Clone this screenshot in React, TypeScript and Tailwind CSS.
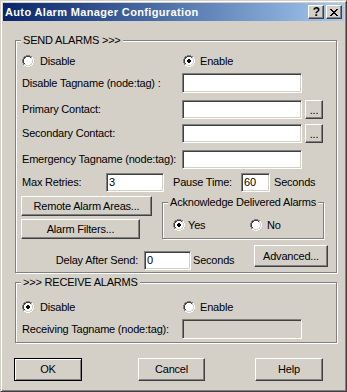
import React from "react";

const COL: Record<string, string> = {
  G: "#808080",
  D: "#404040",
  L: "#d4d0c8",
  W: "#ffffff",
  K: "#000000",
};

const RADIO_MAP = [
  "....GGGG....",
  "..GGDDDDGG..",
  ".GDDWWWWDLW.",
  ".GDWWWWWWLW.",
  "GDWWWWWWWWLW",
  "GDWWWWWWWWLW",
  "GDWWWWWWWWLW",
  "GDWWWWWWWWLW",
  ".GDWWWWWWLW.",
  ".GLLWWWWLLW.",
  "..WWLLLLWW..",
  "....WWWW....",
];

const DOT_MAP = [
  "............",
  "............",
  "............",
  "............",
  ".....KK.....",
  "....KKKK....",
  "....KKKK....",
  ".....KK.....",
  "............",
  "............",
  "............",
  "............",
];

const X_MAP = [
  "KK....KK",
  ".KK..KK.",
  "..KKKK..",
  "...KK...",
  "..KKKK..",
  ".KK..KK.",
  "KK....KK",
];

function Pixels({ map, prefix }: { map: string[]; prefix: string }) {
  const out: React.ReactNode[] = [];
  map.forEach((row, y) =>
    row.split("").forEach((c, x) => {
      if (c !== ".") {
        out.push(
          <rect key={`${prefix}-${x}-${y}`} x={x} y={y} width={1} height={1} fill={COL[c]} />
        );
      }
    })
  );
  return <>{out}</>;
}

function Radio({ checked }: { checked?: boolean }) {
  return (
    <svg width={12} height={12} viewBox="0 0 12 12" shapeRendering="crispEdges" className="shrink-0 block">
      <Pixels map={RADIO_MAP} prefix="r" />
      {checked && <Pixels map={DOT_MAP} prefix="d" />}
    </svg>
  );
}

function Btn({ className, children }: { className: string; children?: React.ReactNode }) {
  return (
    <div
      className={`flex items-center justify-center bg-[#d4d0c8] border border-t-white border-l-white border-r-[#404040] border-b-[#404040] shadow-[inset_-1px_-1px_0_#808080] whitespace-nowrap ${className}`}
    >
      {children}
    </div>
  );
}

function Field({ className, value, disabled }: { className: string; value?: string; disabled?: boolean }) {
  return (
    <div
      className={`flex items-center pl-[2px] border border-t-[#808080] border-l-[#808080] border-r-white border-b-white shadow-[inset_1px_1px_0_#404040,inset_-1px_-1px_0_#d4d0c8] ${
        disabled ? "bg-[#d4d0c8]" : "bg-white"
      } ${className}`}
    >
      {value}
    </div>
  );
}

function Group({ label, className, children }: { label: string; className: string; children?: React.ReactNode }) {
  return (
    <div className={`relative border border-[#808080] shadow-[inset_1px_1px_0_#fff,1px_1px_0_#fff] ${className}`}>
      <span className="absolute left-[5px] -top-[7px] px-[2px] bg-[#d4d0c8] leading-[13px] whitespace-nowrap">
        {label}
      </span>
      {children}
    </div>
  );
}

function TitleBtn({ children }: { children?: React.ReactNode }) {
  return (
    <div className="w-[16px] h-[14px] flex items-center justify-center bg-[#d4d0c8] border border-t-white border-l-white border-r-[#404040] border-b-[#404040] shadow-[inset_-1px_-1px_0_#808080]">
      {children}
    </div>
  );
}

export default function App() {
  return (
    <div className="font-['Liberation_Sans',Arial,sans-serif] text-[11px] leading-[13px] tracking-[-0.2px] text-black">
      <div className="w-[347px] h-[392px] p-[2px] bg-[#d4d0c8] border border-t-[#d4d0c8] border-l-[#d4d0c8] border-r-[#404040] border-b-[#404040] shadow-[inset_1px_1px_0_#fff,inset_-1px_-1px_0_#808080] flex flex-col">
        {/* Title bar */}
        <div className="h-[18px] shrink-0 flex items-center justify-between bg-linear-to-r from-[#0a246a] to-[#a6caf0] pl-[2px] pr-[2px]">
          <span className="text-white font-bold text-[11px] tracking-[0.35px] whitespace-nowrap">
            Auto Alarm Manager Configuration
          </span>
          <div className="flex items-center gap-[2px]">
            <TitleBtn>
              <span className="font-bold text-[12px] leading-[12px] tracking-normal pl-[1px]">?</span>
            </TitleBtn>
            <TitleBtn>
              <svg width={8} height={7} viewBox="0 0 8 7" shapeRendering="crispEdges" className="block">
                <Pixels map={X_MAP} prefix="x" />
              </svg>
            </TitleBtn>
          </div>
        </div>

        {/* SEND ALARMS group */}
        <Group label="SEND ALARMS >>>" className="ml-[12px] mt-[19px] w-[322px] h-[233px] shrink-0 flex flex-col">
          <div className="mt-[14px] h-[12px] flex items-center">
            <div className="w-[167px] pl-[6px] flex items-center">
              <Radio />
              <span className="ml-[6px]">Disable</span>
            </div>
            <Radio checked />
            <span className="ml-[5px]">Enable</span>
          </div>

          <div className="mt-[6px] h-[20px] flex items-center">
            <span className="w-[166px] pl-[6px] whitespace-nowrap">Disable Tagname (node:tag) :</span>
            <Field className="w-[120px] h-[20px]" />
          </div>

          <div className="mt-[7px] h-[19px] flex items-center">
            <span className="w-[166px] pl-[6px] whitespace-nowrap">Primary Contact:</span>
            <Field className="w-[120px] h-[19px]" />
            <Btn className="ml-[3px] w-[18px] h-[19px]">
              <span className="pt-[2px]">...</span>
            </Btn>
          </div>

          <div className="mt-[5px] h-[19px] flex items-center">
            <span className="w-[166px] pl-[6px] whitespace-nowrap">Secondary Contact:</span>
            <Field className="w-[120px] h-[19px]" />
            <Btn className="ml-[3px] w-[18px] h-[19px]">
              <span className="pt-[2px]">...</span>
            </Btn>
          </div>

          <div className="mt-[7px] h-[19px] flex items-center">
            <span className="w-[166px] pl-[6px] whitespace-nowrap">Emergency Tagname (node:tag):</span>
            <Field className="w-[120px] h-[19px]" />
          </div>

          <div className="mt-[4px] h-[19px] flex items-center">
            <span className="w-[90px] pl-[6px] whitespace-nowrap">Max Retries:</span>
            <Field className="w-[58px] h-[19px]" value="3" />
            <span className="ml-[9px] w-[68px] whitespace-nowrap">Pause Time:</span>
            <Field className="w-[29px] h-[19px]" value="60" />
            <span className="ml-[4px] whitespace-nowrap">Seconds</span>
          </div>

          <div className="mt-[4px] flex items-start">
            <div className="ml-[5px] flex flex-col">
              <Btn className="w-[131px] h-[20px]">Remote Alarm Areas...</Btn>
              <Btn className="mt-[3px] w-[119px] h-[20px]">Alarm Filters...</Btn>
            </div>
            <Group label="Acknowledge Delivered Alarms" className="ml-[10px] mt-[6px] w-[162px] h-[37px]">
              <div className="mt-[16px] h-[12px] flex items-center">
                <div className="w-[87px] pl-[10px] flex items-center">
                  <Radio checked />
                  <span className="ml-[3px]">Yes</span>
                </div>
                <Radio />
                <span className="ml-[5px]">No</span>
              </div>
            </Group>
          </div>

          <div className="mt-[6px] flex items-start">
            <div className="w-[238px] mt-[6px] h-[19px] flex items-center">
              <span className="w-[128px] pr-[6px] text-right whitespace-nowrap">Delay After Send:</span>
              <Field className="w-[47px] h-[19px]" value="0" />
              <span className="ml-[2px] whitespace-nowrap">Seconds</span>
            </div>
            <Btn className="w-[74px] h-[22px]">Advanced...</Btn>
          </div>
        </Group>

        {/* RECEIVE ALARMS group */}
        <Group label=">>> RECEIVE ALARMS" className="ml-[12px] mt-[9px] w-[322px] h-[61px] shrink-0 flex flex-col">
          <div className="mt-[18px] h-[12px] flex items-center">
            <div className="w-[167px] pl-[6px] flex items-center">
              <Radio checked />
              <span className="ml-[6px]">Disable</span>
            </div>
            <Radio />
            <span className="ml-[5px]">Enable</span>
          </div>
          <div className="mt-[6px] h-[20px] flex items-center">
            <span className="w-[166px] pl-[6px] whitespace-nowrap">Receiving Tagname (node:tag):</span>
            <Field className="w-[120px] h-[20px]" disabled />
          </div>
        </Group>

        {/* Bottom buttons */}
        <div className="mt-[15px] flex items-start shrink-0">
          <div className="ml-[11px] w-[68px] h-[23px] flex items-center justify-center bg-[#d4d0c8] border border-black shadow-[inset_1px_1px_0_#fff,inset_-1px_-1px_0_#808080]">
            OK
          </div>
          <Btn className="ml-[56px] w-[67px] h-[23px]">Cancel</Btn>
          <Btn className="ml-[50px] w-[68px] h-[23px]">Help</Btn>
        </div>
      </div>
    </div>
  );
}
